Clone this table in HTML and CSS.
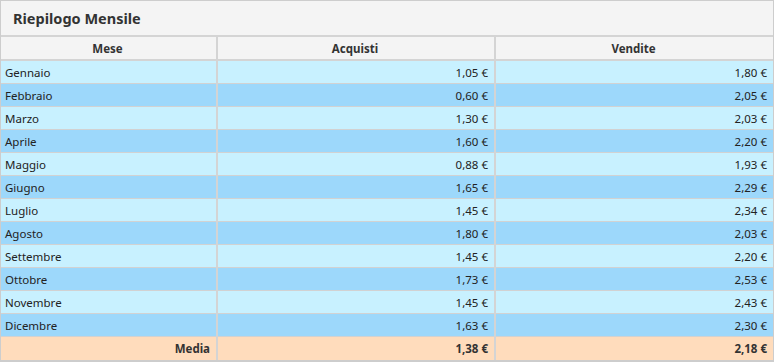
FILE: index.html
```html
<!DOCTYPE html>
<html>
<head>
    <title>Riepilogo Mensile</title>
    <link rel="stylesheet" href="styles.css">
</head>
<body>
    <div class="panel">
        <div class="panel-title">Riepilogo Mensile</div>
        <table class="summary">
            <colgroup>
                <col class="col-month">
                <col class="col-buy">
                <col>
            </colgroup>
            <thead>
                <tr>
                    <th>Mese</th>
                    <th>Acquisti</th>
                    <th>Vendite</th>
                </tr>
            </thead>
            <tbody>
                <tr class="odd"><td>Gennaio</td><td class="num">1,05 €</td><td class="num">1,80 €</td></tr>
                <tr class="even"><td>Febbraio</td><td class="num">0,60 €</td><td class="num">2,05 €</td></tr>
                <tr class="odd"><td>Marzo</td><td class="num">1,30 €</td><td class="num">2,03 €</td></tr>
                <tr class="even"><td>Aprile</td><td class="num">1,60 €</td><td class="num">2,20 €</td></tr>
                <tr class="odd"><td>Maggio</td><td class="num">0,88 €</td><td class="num">1,93 €</td></tr>
                <tr class="even"><td>Giugno</td><td class="num">1,65 €</td><td class="num">2,29 €</td></tr>
                <tr class="odd"><td>Luglio</td><td class="num">1,45 €</td><td class="num">2,34 €</td></tr>
                <tr class="even"><td>Agosto</td><td class="num">1,80 €</td><td class="num">2,03 €</td></tr>
                <tr class="odd"><td>Settembre</td><td class="num">1,45 €</td><td class="num">2,20 €</td></tr>
                <tr class="even"><td>Ottobre</td><td class="num">1,73 €</td><td class="num">2,53 €</td></tr>
                <tr class="odd"><td>Novembre</td><td class="num">1,45 €</td><td class="num">2,43 €</td></tr>
                <tr class="even"><td>Dicembre</td><td class="num">1,63 €</td><td class="num">2,30 €</td></tr>
            </tbody>
            <tfoot>
                <tr class="total"><td class="num">Media</td><td class="num">1,38 €</td><td class="num">2,18 €</td></tr>
            </tfoot>
        </table>
    </div>
</body>
</html>
```

FILE: styles.css
```css
body {
    margin: 0;
    font-family: 'Noto Sans', 'Open Sans', sans-serif;
    font-size: 11.5px;
    color: #222;
    background: #fff;
}

.panel {
    width: 772px;
    border: 1px solid #cdcdcd;
    border-bottom-width: 2px;
    background: #f4f4f4;
}

.panel-title {
    height: 34px;
    line-height: 35px;
    padding-left: 12px;
    font-size: 14.5px;
    font-weight: 700;
    color: #333;
}

.summary {
    width: 100%;
    border-collapse: collapse;
    table-layout: fixed;
}

.col-month {
    width: 216px;
}

.col-buy {
    width: 278px;
}

.summary th,
.summary td {
    height: 22px;
    padding: 0 6px 0 4px;
    border-right: 2px solid #d4d4d4;
    border-bottom: 1px solid #d2d2d2;
    white-space: nowrap;
}

.summary th:last-child,
.summary td:last-child {
    border-right: none;
}

.summary th {
    height: 22px;
    border-top: 2px solid #d4d4d4;
    border-bottom: 2px solid #d4d4d4;
    background: #f4f4f4;
    font-weight: 700;
    color: #333;
    text-align: center;
}

.summary .num {
    text-align: right;
}

.summary tr.odd td {
    background: #c8f1ff;
}

.summary tr.even td {
    background: #9dd8fb;
}

.summary tr.total td {
    height: 23px;
    background: #ffdcbc;
    font-weight: 700;
    color: #333;
    border-bottom: none;
}
```
